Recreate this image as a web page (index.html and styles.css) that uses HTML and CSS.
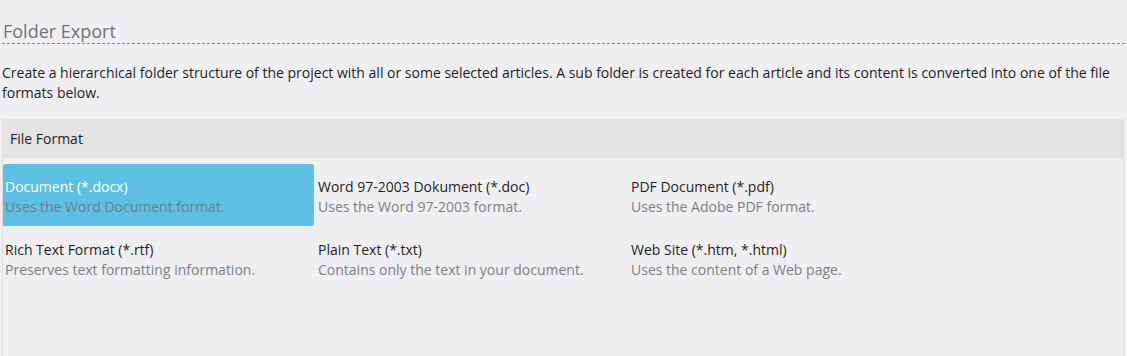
FILE: index.html
```html
<!DOCTYPE html>
<html lang="en">
<head>
    <meta charset="UTF-8" />
    <title>Folder Export</title>
    <link rel="stylesheet" href="styles.css">
</head>
<body>

<div class="page">
    <h1 class="title">Folder Export</h1>

    <p class="intro">Create a hierarchical folder structure of the project with all or some selected articles. A sub folder is created for each article and its content is converted into one of the file formats below.</p>

    <!-- File Format -->
    <div class="panel">
        <div class="panel-header">File Format</div>
        <div class="formats">
            <div class="format selected">
                <div class="format-name">Document (*.docx)</div>
                <div class="format-desc">Uses the Word Document format.</div>
            </div>
            <div class="format">
                <div class="format-name">Word 97-2003 Dokument (*.doc)</div>
                <div class="format-desc">Uses the Word 97-2003 format.</div>
            </div>
            <div class="format">
                <div class="format-name">PDF Document (*.pdf)</div>
                <div class="format-desc">Uses the Adobe PDF format.</div>
            </div>
            <div class="format">
                <div class="format-name">Rich Text Format (*.rtf)</div>
                <div class="format-desc">Preserves text formatting information.</div>
            </div>
            <div class="format">
                <div class="format-name">Plain Text (*.txt)</div>
                <div class="format-desc">Contains only the text in your document.</div>
            </div>
            <div class="format">
                <div class="format-name">Web Site (*.htm, *.html)</div>
                <div class="format-desc">Uses the content of a Web page.</div>
            </div>
        </div>
    </div>
</div>

</body>
</html>
```

FILE: styles.css
```css
body {
    font-family: 'Open Sans', 'Noto Sans', sans-serif;
    background-color: #efeff2;
    color: #1e1e1e;
    margin: 0;
    height: 356px;
    overflow: hidden;
}
.page {
    padding: 0 2px;
}
.title {
    font-size: 18px;
    font-weight: 400;
    color: #717178;
    margin: 0;
    padding: 19px 0 0 1px;
    line-height: 24px;
    border-bottom: 1px dashed #8a8a8a;
}
.intro {
    font-size: 14px;
    line-height: 20px;
    margin: 19px 0 16px 0;
    padding-right: 2px;
}
.panel {
    border-left: 1px solid #dcdcdf;
    border-right: 1px solid #dcdcdf;
    margin-right: 1px;
    height: 240px;
}
.panel-header {
    background-color: #e3e3e3;
    font-size: 14px;
    height: 39px;
    line-height: 40px;
    padding-left: 7px;
}
.formats {
    display: grid;
    grid-template-columns: repeat(3, 311px);
    grid-auto-rows: 62px;
    gap: 1px 2px;
    padding-top: 6px;
}
.format {
    padding: 13px 3px 0 2px;
    border-radius: 2px;
    font-size: 14px;
    line-height: 20px;
}
.format-desc {
    color: #7e7e84;
}
.format.selected {
    background-color: #5ebfe5;
    color: #ffffff;
}
.format.selected .format-desc {
    color: #6d7c85;
}
```
